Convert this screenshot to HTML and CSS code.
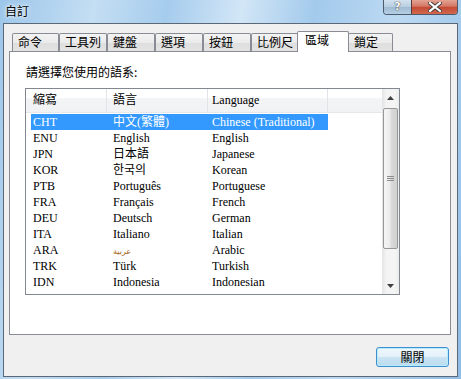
FILE: index.html
```html
<!DOCTYPE html>
<html lang="zh-Hant">
<head>
    <meta charset="UTF-8">
    <title>自訂</title>
    <link rel="stylesheet" href="styles.css">
</head>
<body>

<div class="window">
    <!-- Title bar -->
    <div class="titlebar">
        <span class="title">自訂</span>
        <div class="caption">
            <span class="cap-help">?</span>
            <span class="cap-close">
                <svg width="14" height="10" viewBox="0 0 14 10">
                    <path d="M2 1 L12 9 M12 1 L2 9" stroke="#3b3b3b" stroke-width="4" stroke-linecap="square"/>
                    <path d="M2 1 L12 9 M12 1 L2 9" stroke="#fff" stroke-width="2.2" stroke-linecap="square"/>
                </svg>
            </span>
        </div>
    </div>

    <div class="client">
        <!-- Tabs -->
        <div class="tabs">
            <div class="tab tab-first">命令</div>
            <div class="tab">工具列</div>
            <div class="tab">鍵盤</div>
            <div class="tab">選項</div>
            <div class="tab">按鈕</div>
            <div class="tab">比例尺</div>
            <div class="tab tab-active">區域</div>
            <div class="tab tab-last">鎖定</div>
        </div>

        <div class="panel">
            <p class="prompt">請選擇您使用的語系:</p>

            <div class="listview">
                <div class="list-main">
                    <div class="list-head">
                        <div class="hcell h1">縮寫</div>
                        <div class="hcell h2">語言</div>
                        <div class="hcell h3">Language</div>
                        <div class="hcell h4"></div>
                    </div>
                    <div class="rows">
                        <div class="row row-selected"><span class="c1">CHT</span><span class="c2">中文(繁體)</span><span class="c3">Chinese (Traditional)</span></div>
                        <div class="row"><span class="c1">ENU</span><span class="c2">English</span><span class="c3">English</span></div>
                        <div class="row"><span class="c1">JPN</span><span class="c2">日本語</span><span class="c3">Japanese</span></div>
                        <div class="row"><span class="c1">KOR</span><span class="c2">한국의</span><span class="c3">Korean</span></div>
                        <div class="row"><span class="c1">PTB</span><span class="c2">Português</span><span class="c3">Portuguese</span></div>
                        <div class="row"><span class="c1">FRA</span><span class="c2">Français</span><span class="c3">French</span></div>
                        <div class="row"><span class="c1">DEU</span><span class="c2">Deutsch</span><span class="c3">German</span></div>
                        <div class="row"><span class="c1">ITA</span><span class="c2">Italiano</span><span class="c3">Italian</span></div>
                        <div class="row"><span class="c1">ARA</span><span class="c2"><span class="arabic">عربية</span></span><span class="c3">Arabic</span></div>
                        <div class="row"><span class="c1">TRK</span><span class="c2">Türk</span><span class="c3">Turkish</span></div>
                        <div class="row"><span class="c1">IDN</span><span class="c2">Indonesia</span><span class="c3">Indonesian</span></div>
                    </div>
                </div>

                <!-- Vertical scrollbar -->
                <div class="scrollbar">
                    <div class="sb-btn">
                        <svg width="7" height="4" viewBox="0 0 7 4"><path d="M0 4 L3.5 0 L7 4 Z" fill="#3f3f3f"/></svg>
                    </div>
                    <div class="sb-thumb">
                        <svg width="7" height="7" viewBox="0 0 7 7">
                            <path d="M0 1.5 H7 M0 3.5 H7 M0 5.5 H7" stroke="#8c8c8c" stroke-width="1"/>
                        </svg>
                    </div>
                    <div class="sb-track"></div>
                    <div class="sb-btn">
                        <svg width="7" height="4" viewBox="0 0 7 4"><path d="M0 0 L3.5 4 L7 0 Z" fill="#3f3f3f"/></svg>
                    </div>
                </div>
            </div>
        </div>

        <div class="footer">
            <button class="close-btn">關閉</button>
        </div>
    </div>
</div>

</body>
</html>
```

FILE: styles.css
```css
/* Page */
body {
    margin: 0;
}
.window {
    width: 461px;
    height: 379px;
    box-sizing: border-box;
    padding: 0 3px 2px 3px;
    display: flex;
    flex-direction: column;
    background: linear-gradient(100deg, #9cc6ea 0%, #c4def3 18%, #a6cced 32%, #d2e6f6 46%, #a3caec 60%, #bcd9f2 76%, #8fbde6 100%);
    font-family: "Liberation Serif", "Noto Sans CJK TC", "Noto Sans CJK KR", serif;
    font-size: 12px;
    color: #000;
}

/* Title bar */
.titlebar {
    height: 23px;
    display: flex;
    justify-content: space-between;
    align-items: flex-start;
}
.title {
    font-family: "Noto Sans CJK TC", sans-serif;
    font-size: 12px;
    line-height: 14px;
    padding: 4px 0 0 2px;
    text-shadow: 0 0 6px #fff, 0 0 3px #fff;
}
.caption {
    display: flex;
    height: 15px;
    box-sizing: border-box;
    border: 1px solid #4c5a6b;
    border-top: 0;
    border-radius: 0 0 4px 4px;
    overflow: hidden;
}
.cap-help {
    width: 27px;
    text-align: center;
    font-family: "DejaVu Sans", sans-serif;
    font-weight: bold;
    font-size: 11px;
    line-height: 13px;
    color: #fff;
    text-shadow: 0 0 1px #333, 0 0 1px #333;
    background: linear-gradient(#d3e2ee, #b6cde0 50%, #9fbad2 51%, #b5cfe4);
}
.cap-close {
    width: 45px;
    border-left: 1px solid #5a3a36;
    display: flex;
    align-items: center;
    justify-content: center;
    background: linear-gradient(#e4a394, #d47665 45%, #c44a34 52%, #d2684e);
}

/* Client area */
.client {
    flex: 1;
    border: 1px solid #5b6877;
    background-color: #f0f0f0;
    padding: 7px 5px 0 5px;
    display: flex;
    flex-direction: column;
}

/* Tabs */
.tabs {
    display: flex;
    align-items: flex-end;
    height: 20px;
    margin-left: 3px;
}
.tab {
    width: 48px;
    height: 18px;
    box-sizing: border-box;
    border: 1px solid #898c95;
    border-bottom: 0;
    border-radius: 2px 2px 0 0;
    padding-left: 5px;
    font-family: "Noto Sans CJK TC", sans-serif;
    line-height: 16px;
    background: linear-gradient(#f3f3f3, #ebebeb 50%, #dedede 51%, #e3e3e3);
}
.tab-first {
    width: 47px;
}
.tab-active {
    width: 52px;
    height: 21px;
    margin: 0 -1px -1px -2px;
    padding-left: 7px;
    line-height: 15px;
    background: #fff;
    position: relative;
    z-index: 1;
}
.tab-last {
    width: 45px;
}

/* Tab page */
.panel {
    width: 442px;
    height: 284px;
    box-sizing: border-box;
    border: 1px solid #898c95;
    background-color: #fff;
    padding: 12px 0 0 15px;
}
.prompt {
    margin: 0 0 8px 0;
    padding-left: 1px;
    font-family: "Noto Sans CJK TC", sans-serif;
    line-height: 16px;
}

/* List view */
.listview {
    width: 375px;
    height: 207px;
    box-sizing: border-box;
    border: 1px solid #828790;
    display: flex;
}
.list-main {
    flex: 1;
}
.list-head {
    display: flex;
    height: 24px;
    box-sizing: border-box;
    border-bottom: 1px solid #e5e7ea;
    background: linear-gradient(#ffffff 0%, #ffffff 38%, #f3f4f6 42%, #f1f2f4 100%);
}
.hcell {
    box-sizing: border-box;
    border-right: 1px solid #e1e4e8;
    line-height: 23px;
}
.h1 { width: 81px; padding-left: 7px; }
.h2 { width: 101px; padding-left: 6px; }
.h3 { width: 120px; padding-left: 4px; }
.h4 { flex: 1; border-right: 0; }

.rows {
    padding-top: 1px;
}
.row {
    display: flex;
    width: 297px;
    height: 16px;
    margin-left: 5px;
    line-height: 16px;
    white-space: nowrap;
}
.row span {
    box-sizing: border-box;
}
.c1 { width: 76px; padding-left: 2px; }
.c2 { width: 101px; padding-left: 6px; }
.c3 { width: 120px; padding-left: 4px; }
.row-selected {
    background-color: #3399ff;
    color: #fff;
}
.arabic {
    font-family: "DejaVu Sans", sans-serif;
    font-size: 8px;
    color: #a06010;
}

/* Scrollbar */
.scrollbar {
    width: 17px;
    display: flex;
    flex-direction: column;
    background: linear-gradient(90deg, #e4e4e4, #f3f3f3 25%, #f5f5f5 75%, #ececec);
}
.sb-btn {
    height: 17px;
    display: flex;
    align-items: center;
    justify-content: center;
}
.sb-thumb {
    height: 141px;
    margin: 2px 1px 0 1px;
    box-sizing: border-box;
    border: 1px solid #979797;
    border-radius: 2px;
    display: flex;
    align-items: center;
    justify-content: center;
    background: linear-gradient(90deg, #f5f5f5, #ececec 45%, #dadada 55%, #d0d0d0);
}
.sb-track {
    flex: 1;
}

/* Footer */
.footer {
    display: flex;
    justify-content: flex-end;
    padding: 12px 3px 0 0;
}
.close-btn {
    width: 73px;
    height: 20px;
    padding: 0;
    border: 1px solid #3c8fd0;
    border-radius: 3px;
    box-shadow: inset 0 0 0 1px #b7ecfd;
    background: linear-gradient(#eef7fc, #e3f1fa 48%, #c9e3f2 52%, #bcdcef);
    font-family: "Noto Sans CJK TC", sans-serif;
    font-size: 12px;
    line-height: 16px;
    color: #000;
}
```
